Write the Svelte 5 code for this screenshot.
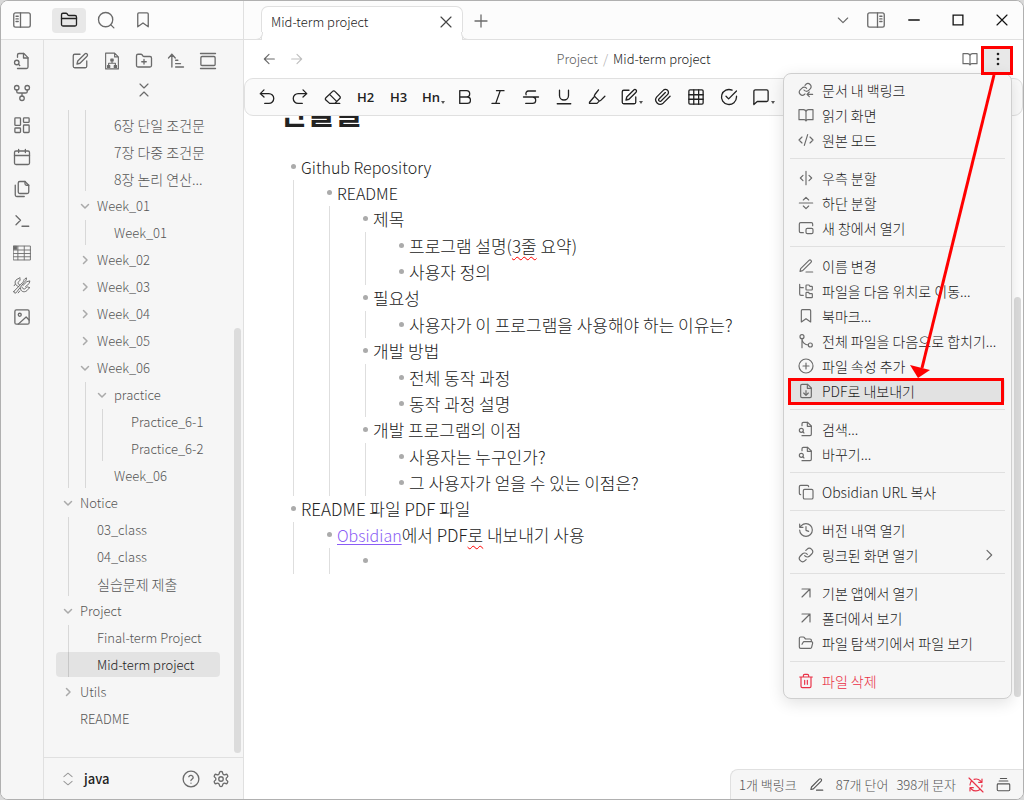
<script>
  const linkPaths =
    '<path d="M10 13a5 5 0 0 0 7.54.54l3-3a5 5 0 0 0-7.07-7.07l-1.72 1.71"/><path d="M14 11a5 5 0 0 0-7.54-.54l-3 3a5 5 0 0 0 7.07 7.07l1.71-1.71"/>';
  const folderPath =
    '<path d="M20 20a2 2 0 0 0 2-2V8a2 2 0 0 0-2-2h-7.9a2 2 0 0 1-1.69-.9L9.6 3.9A2 2 0 0 0 7.93 3H4a2 2 0 0 0-2 2v13a2 2 0 0 0 2 2Z"/>';
  const editPaths =
    '<path d="M12 3H5a2 2 0 0 0-2 2v14a2 2 0 0 0 2 2h14a2 2 0 0 0 2-2v-7"/><path d="M18.4 2.6a2.1 2.1 0 1 1 3 3L12 15l-4 1 1-4Z"/>';

  const icons = {
    panelLeft: '<rect x="1" y="2.500" width="22" height="19" rx="2.500"/><path d="M10 2.500v19M4 7h3M4 10.500h3M4 14h3"/>',
    panelRight: '<rect x="1" y="2.500" width="22" height="19" rx="2.500"/><path d="M14 2.500v19M17 7h3M17 10.500h3M17 14h3"/>',
    folder: folderPath + '<path d="M2 10h20"/>',
    search: '<circle cx="11.500" cy="11.500" r="9.500"/><path d="m22.500 22.500-4.300-4.300"/>',
    bookmark: '<path d="m19 21-7-5-7 5V4a1.500 1.500 0 0 1 1.500-1.500h11A1.500 1.500 0 0 1 19 4z"/>',
    fileSearch:
      '<path d="M6 22h12a2 2 0 0 0 2-2V7.500L14.500 2H8a2 2 0 0 0-2 2v3"/><path d="M14 2v6h6"/><circle cx="5" cy="14" r="3"/><path d="m9 18-1.700-1.700"/>',
    fork: '<circle cx="12" cy="19" r="3"/><circle cx="5" cy="5" r="3"/><circle cx="19" cy="5" r="3"/><path d="M19 8v1.500a2.500 2.500 0 0 1-2.500 2.500h-9A2.500 2.500 0 0 1 5 9.500V8M12 12v4"/>',
    dashboard:
      '<rect x="2.500" y="2.500" width="7.500" height="10" rx="1"/><rect x="14" y="2.500" width="7.500" height="6" rx="1"/><rect x="14" y="12" width="7.500" height="10" rx="1"/><rect x="2.500" y="16" width="7.500" height="6" rx="1"/>',
    calendar: '<rect x="2" y="4" width="20" height="18" rx="2"/><path d="M16.500 2v4M7.500 2v4M2 10h20"/>',
    files:
      '<path d="M21 7h-3a2 2 0 0 1-2-2V2"/><path d="M9 18a2 2 0 0 1-2-2V4a2 2 0 0 1 2-2h7l5 5v9a2 2 0 0 1-2 2Z"/><path d="M3 7v13a2 2 0 0 0 2 2h10"/>',
    terminal: '<path d="m4 17 6-6-6-6M12 19h9"/>',
    grid: '<g stroke-width="1.200"><path d="M.8 2.700h22.400v18.600H.8zM.8 8h22.400M.8 12.700h22.400M.8 17h22.400M6.500 3v18M15 3v18"/><path d="M1 3h4v4H1z" fill="currentColor"/></g>',
    tools:
      '<g stroke-width="1.300"><path d="M1.200 20.500 13 8.500c1.500-1.500 1-3.500 3-5l2-1-.5 3-3 3.500L4 22.500c-1.500 1-3.800-.8-2.800-2Z"/><path d="M7.500 14C3 13 1.500 8.500 4 5.500c1.500-2 4-1.500 5-3.500l.5 3.500C8 7.500 6 8 7 10.500l2 1.500"/><path d="M10 16.500c0 3.500 3.500 5.500 7 4 3-1.200 3-4 5.500-5l-3.500-1c-2 1-3 4-5.500 2.500L12 15"/><path d="m13.500 12.500 5-5 4-1-1 3.500-5 4.500M9 20l-2 2.500M3 11l-1.500 2"/></g>',
    image: '<rect x="2.500" y="2.500" width="19" height="19" rx="2"/><circle cx="9" cy="9" r="2"/><path d="m21.500 16-4-4L7 21.500"/>',
    edit: editPaths,
    canvas:
      '<g stroke-width="1.500"><path d="M3.500 1.500h12l5 5v16h-17zM15.500 1.500v5h5"/><path d="M12 12v3M7.500 18v-3h9v3"/><path d="M10.500 9.500h3V12h-3zM6 18h3v2.500H6zM15 18h3v2.500h-3z" fill="currentColor"/></g>',
    folderPlus: '<path d="M12 10v6M9 13h6"/>' + folderPath,
    sort: '<path d="m2 8 4.500-5L11 8M6.500 3v17M11.500 11h3M11.500 15.500h6.500M11.500 20h10.500"/>',
    gallery: '<path d="M2 2h20M2 22h20"/><rect x="2.500" y="6" width="19" height="12" rx="1.500"/>',
    collapse: '<path d="m6 21 6-6 6 6M6 3l6 6 6-6"/>',
    upDown: '<path d="m5 16 7 6 7-6M5 8l7-6 7 6"/>',
    help: '<circle cx="12" cy="12" r="10.500"/><path d="M9.100 9a3 3 0 0 1 5.800 1c0 2-3 2.500-3 4M12 17.500h.01"/>',
    gear: '<path d="M12.220 2h-.44a2 2 0 0 0-2 2v.18a2 2 0 0 1-1 1.730l-.43.25a2 2 0 0 1-2 0l-.15-.08a2 2 0 0 0-2.730.73l-.22.38a2 2 0 0 0 .73 2.730l.15.1a2 2 0 0 1 1 1.720v.51a2 2 0 0 1-1 1.740l-.15.09a2 2 0 0 0-.73 2.730l.22.38a2 2 0 0 0 2.730.73l.15-.08a2 2 0 0 1 2 0l.43.25a2 2 0 0 1 1 1.730V20a2 2 0 0 0 2 2h.44a2 2 0 0 0 2-2v-.18a2 2 0 0 1 1-1.730l.43-.25a2 2 0 0 1 2 0l.15.08a2 2 0 0 0 2.730-.73l.22-.39a2 2 0 0 0-.73-2.730l-.15-.08a2 2 0 0 1-1-1.740v-.5a2 2 0 0 1 1-1.740l.15-.09a2 2 0 0 0 .73-2.730l-.22-.38a2 2 0 0 0-2.730-.73l-.15.08a2 2 0 0 1-2 0l-.43-.25a2 2 0 0 1-1-1.730V4a2 2 0 0 0-2-2z"/><circle cx="12" cy="12" r="3"/>',
    down: '<path d="m5 9 7 7 7-7"/>',
    right: '<path d="m9 5 7 7-7 7"/>',
    arrowLeft: '<path d="m12 19-7-7 7-7M20 12H5"/>',
    arrowRight: '<path d="m12 5 7 7-7 7M4 12h15"/>',
    close: '<path d="M4.500 4.500l15 15M19.500 4.500l-15 15"/>',
    plus: '<path d="M4 12h16M12 4v16"/>',
    minimize: '<path d="M5 12h14"/>',
    maximize: '<path d="M5.500 5.500h13v13h-13z" stroke-linejoin="miter"/>',
    undo: '<path d="M8 12 3 7.500l5-5M3 7.500h11.500a6.500 6.500 0 0 1 0 13H9"/>',
    redo: '<path d="m16 12 5-4.500-5-5M21 7.500H9.500a6.500 6.500 0 0 0 0 13H15"/>',
    eraser: '<path d="M9 20.500H7.500l-5-4.500a2 2 0 0 1 0-3l9-8.500a2 2 0 0 1 3 0l6.500 6.500a2 2 0 0 1 0 3l-6.500 6.500H9M7.500 8.500l9 9M14.500 20.500H21"/>',
    bold: '<path d="M6 12h9a4.200 4.200 0 0 1 0 8.500H5V3.500h9a4.200 4.200 0 0 1 0 8.500M5 12h1"/>',
    italic: '<path d="M20 3.500H10M14 20.500H4M15 3.500l-6 17"/>',
    strike: '<path d="M18 4H9a3.500 3.500 0 0 0-3.500 5M14 12a4 4 0 0 1 0 8.500H5M2 12h20"/>',
    underline: '<path d="M6 3v7a6 6 0 0 0 12 0V3M3 21h18"/>',
    highlight: '<path d="m8 12-6 7v1.500h10l3-3M22.500 11l-5.500 5.500a2 2 0 0 1-2.800 0l-5-5a2 2 0 0 1 0-2.800L14 2.500"/>',
    clip: '<path d="m21.400 11-9.200 9.200a6 6 0 0 1-8.500-8.400l8.600-8.600A4 4 0 1 1 18 8.800l-8.600 8.600a2 2 0 0 1-2.800-2.800l8.500-8.500"/>',
    table: '<rect x="2.500" y="2.500" width="19" height="19" rx="1.500"/><path d="M2.500 9h19M2.500 15h19M9 2.500v19M15.500 2.500v19"/>',
    check: '<path d="M22 11v1a10 10 0 1 1-5.900-9.100"/><path d="m8 11 3.500 3.500L22 4"/>',
    comment: '<path d="M21.500 16a2 2 0 0 1-2 2H7l-4.500 4V4.500a2 2 0 0 1 2-2h15a2 2 0 0 1 2 2z"/>',
    book: '<path d="M1.500 4H8a4 4 0 0 1 4 3v14a3 3 0 0 0-3-2H1.500zM22.500 4H16a4 4 0 0 0-4 3v14a3 3 0 0 1 3-2h7.500z"/>',
    more: '<path d="M12 4.500h.01M12 12h.01M12 19.500h.01" stroke-width="4"/>',
    backlink:
      '<path d="M9 12a4.500 4.500 0 0 0 7 .5l2.500-2.500a4.700 4.700 0 0 0-6.600-6.600L10.500 5"/><path d="M13 9.500a4.500 4.500 0 0 0-7-.3l-3 3a4.700 4.700 0 0 0 6.600 6.600l.9-1"/><path d="M22 18.500h-8M17 15l-3.500 3.500L17 22"/>',
    code: '<path d="m18 16.500 4.500-4.500L18 7.500M6 7.500 1.500 12 6 16.500M14.500 4l-5 16"/>',
    splitV: '<path d="M12 2v20M7.500 8l-4 4 4 4M16.500 16l4-4-4-4"/>',
    splitH: '<path d="M2 12h20M8 7.500l4-4 4 4M16 16.500l-4 4-4-4"/>',
    popout: '<path d="M22 8.500V6a2 2 0 0 0-2-2H4a2 2 0 0 0-2 2v11a2 2 0 0 0 2 2h4"/><rect x="12" y="12.500" width="10.500" height="8" rx="2"/>',
    pen: '<path d="M12 21h10"/><path d="M16.500 3.500a2.100 2.100 0 0 1 3 3L7 19l-4 1 1-4Z"/>',
    tree: '<path d="M20.500 10.500a1 1 0 0 0 1-1V6a1 1 0 0 0-1-1H18l-1.500-2H13a1 1 0 0 0-1 1v5.500a1 1 0 0 0 1 1ZM20.500 22a1 1 0 0 0 1-1v-4a1 1 0 0 0-1-1H17l-1-2h-3a1 1 0 0 0-1 1v6a1 1 0 0 0 1 1Z"/><path d="M2.500 2v14.500a2 2 0 0 0 2 2H8M2.500 5a2 2 0 0 0 2 2H8"/>',
    merge: '<circle cx="18.500" cy="18" r="3"/><circle cx="6" cy="5.500" r="3"/><path d="M6 22V8.500a9.500 9.500 0 0 0 9.500 9.500"/>',
    plusCircle: '<circle cx="12" cy="12" r="10.500"/><path d="M7.500 12h9M12 7.500v9"/>',
    fileDown: '<path d="M14.500 2H6a2 2 0 0 0-2 2v16a2 2 0 0 0 2 2h12a2 2 0 0 0 2-2V7.500L14.500 2z"/><path d="M14 2v6h6M12 18v-6.500M8.500 15l3.500 3.500 3.500-3.500"/>',
    copy: '<rect x="8" y="8" width="14.500" height="14.500" rx="2"/><path d="M4 16a2 2 0 0 1-2-2V4a2 2 0 0 1 2-2h10a2 2 0 0 1 2 2"/>',
    history: '<path d="M2.500 12A9.500 9.500 0 1 0 12 2.500a10 10 0 0 0-7 3L2.500 8M2.500 3v5h5M12 7v5.500l4 1.500"/>',
    link: linkPaths,
    upRight: '<path d="M6 6h12v12M6 18 18 6"/>',
    folderOpen:
      '<path d="m6 14 1.500-2.900A2 2 0 0 1 9.200 10H20a2 2 0 0 1 1.900 2.500l-1.500 6a2 2 0 0 1-2 1.500H4a2 2 0 0 1-2-2V5a2 2 0 0 1 2-2h3.900a2 2 0 0 1 1.700.9l.8 1.200a2 2 0 0 0 1.700.9H18a2 2 0 0 1 2 2v2"/>',
    trash: '<path d="M2.500 6h19M19.500 6v14a2 2 0 0 1-2 2h-11a2 2 0 0 1-2-2V6M8 6V4a2 2 0 0 1 2-2h4a2 2 0 0 1 2 2v2M10 11v6M14 11v6"/>',
    syncOff:
      '<path d="m21 8-2.300-2.300A9.700 9.700 0 0 0 9.100 3.500M8 16H3v5M3 12a9 9 0 0 1 2.600-6.400M3 16l2.300 2.300a9.700 9.700 0 0 0 13.100.1M21 12a9 9 0 0 1-.5 2.900M21 3v5h-5M22.500 22.500l-21-21"/>',
    stack: '<path d="M7 2.500h10M5 6.500h14"/><rect x="2" y="11" width="20" height="11" rx="1.500"/>',
  };

  const ribbon = [
    ['fileSearch', '빠른 전환기'], ['fork', '그래프 뷰'], ['dashboard', '캔버스'], ['calendar', '일일 노트'], ['files', '템플릿'],
    ['terminal', '명령어'], ['grid', '표'], ['tools', '도구'], ['image', '이미지'],
  ];
  const navActions = [
    ['edit', '새 노트'], ['canvas', '새 캔버스'], ['folderPlus', '새 폴더'], ['sort', '정렬'], ['gallery', '자동 표시'], ['collapse', '모두 접기'],
  ];

  const tree = [
    { kids: [
      { kids: [{ name: '6장 단일 조건문' }, { name: '7장 다중 조건문' }, { name: '8장 논리 연산...' }] },
      { name: 'Week_01', open: true, kids: [{ name: 'Week_01' }] },
      { name: 'Week_02', open: false },
      { name: 'Week_03', open: false },
      { name: 'Week_04', open: false },
      { name: 'Week_05', open: false },
      { name: 'Week_06', open: true, kids: [
        { name: 'practice', open: true, kids: [{ name: 'Practice_6-1' }, { name: 'Practice_6-2' }] },
        { name: 'Week_06' },
      ] },
    ] },
    { name: 'Notice', open: true, kids: [{ name: '03_class' }, { name: '04_class' }, { name: '실습문제 제출' }] },
    { name: 'Project', open: true, kids: [{ name: 'Final-term Project' }, { name: 'Mid-term project', active: true }] },
    { name: 'Utils', open: false },
    { name: 'README' },
  ];

  const tools = [
    { icon: 'undo' }, { icon: 'redo' }, { icon: 'eraser' }, { text: 'H2' }, { text: 'H3' }, { text: 'Hn', more: true },
    { icon: 'bold' }, { icon: 'italic' }, { icon: 'strike' }, { icon: 'underline' }, { icon: 'highlight' },
    { icon: 'edit', more: true }, { icon: 'clip' }, { icon: 'table' }, { icon: 'check' }, { icon: 'comment', more: true },
  ];

  const notes = [
    { parts: [['Github Repository']], kids: [
      { parts: [['README']], kids: [
        { parts: [['제목']], kids: [
          { parts: [['프로그램 설명('], ['3줄', 'typo'], [' 요약)']] },
          { parts: [['사용자 정의']] },
        ] },
        { parts: [['필요성']], kids: [{ parts: [['사용자가 이 프로그램을 사용해야 하는 이유는?']] }] },
        { parts: [['개발 방법']], kids: [{ parts: [['전체 동작 과정']] }, { parts: [['동작 과정 설명']] }] },
        { parts: [['개발 프로그램의 이점']], kids: [
          { parts: [['사용자는 누구인가?']] },
          { parts: [['그 사용자가 얻을 수 있는 이점은?']] },
        ] },
      ] },
    ] },
    { parts: [['README 파일 PDF 파일']], kids: [
      { parts: [['Obsidian', 'link'], ['에서 PDF'], ['로', 'typo'], [' 내보내기 사용']], kids: [{ parts: [] }] },
    ] },
  ];

  const menu = [
    [['backlink', '문서 내 백링크'], ['book', '읽기 화면'], ['code', '원본 모드']],
    [['splitV', '우측 분할'], ['splitH', '하단 분할'], ['popout', '새 창에서 열기']],
    [['pen', '이름 변경'], ['tree', '파일을 다음 위치로 이동...'], ['bookmark', '북마크...'], ['merge', '전체 파일을 다음으로 합치기...'],
      ['plusCircle', '파일 속성 추가'], ['fileDown', 'PDF로 내보내기', 'selected']],
    [['fileSearch', '검색...'], ['fileSearch', '바꾸기...']],
    [['copy', 'Obsidian URL 복사']],
    [['history', '버전 내역 열기'], ['link', '링크된 화면 열기', 'submenu']],
    [['upRight', '기본 앱에서 열기'], ['upRight', '폴더에서 보기'], ['folderOpen', '파일 탐색기에서 파일 보기']],
    [['trash', '파일 삭제', 'danger']],
  ];

  const isLatin = (text) => !/[가-힣]/.test(text);
</script>

{#snippet icon(name, size = 18)}
  <svg class="icon" width={size} height={size} viewBox="0 0 24 24" aria-hidden="true">{@html icons[name]}</svg>
{/snippet}

{#snippet branch(items, depth)}
  <ul class="branch d{depth}">
    {#each items as item}
      <li>
        {#if item.name}
          <button class="file" class:latin={isLatin(item.name)} class:active={item.active}>
            {#if item.open !== undefined}
              <span class="twist">{@render icon(item.open ? 'down' : 'right', 12)}</span>
            {/if}
            <span>{item.name}</span>
          </button>
        {/if}
        {#if item.kids}{@render branch(item.kids, depth + 1)}{/if}
      </li>
    {/each}
  </ul>
{/snippet}

{#snippet outline(items)}
  <ul class="outline">
    {#each items as item}
      <li>
        <p class:latin={item.parts.every(([text]) => isLatin(text))}>
          {#each item.parts as [text, kind]}{#if kind === 'link'}<a href="#obsidian">{text}</a>{:else}<span class:typo={kind === 'typo'}>{text}</span>{/if}{/each}
        </p>
        {#if item.kids}{@render outline(item.kids)}{/if}
      </li>
    {/each}
  </ul>
{/snippet}

<div class="window">
  <header class="titlebar">
    <div class="side-tabs">
      <button class="tool" aria-label="사이드바 접기">{@render icon('panelLeft')}</button>
      <button class="tool on" aria-label="파일">{@render icon('folder')}</button>
      <button class="tool" aria-label="찾기">{@render icon('search')}</button>
      <button class="tool" aria-label="책갈피">{@render icon('bookmark')}</button>
    </div>
    <div class="tabs">
      <div class="tab">
        <span class="latin">Mid-term project</span>
        <button aria-label="탭 닫기">{@render icon('close', 16)}</button>
      </div>
      <button class="add" aria-label="새 탭">{@render icon('plus', 18)}</button>
    </div>
    <div class="controls">
      <button class="tool" aria-label="탭 목록">{@render icon('down', 16)}</button>
      <button class="tool" aria-label="오른쪽 사이드바">{@render icon('panelRight')}</button>
      <button class="sys" aria-label="최소화">{@render icon('minimize', 18)}</button>
      <button class="sys" aria-label="최대화">{@render icon('maximize', 18)}</button>
      <button class="sys" aria-label="닫기">{@render icon('close', 16)}</button>
    </div>
  </header>

  <div class="body">
    <nav class="ribbon">
      {#each ribbon as [name, label]}
        <button aria-label={label}>{@render icon(name)}</button>
      {/each}
    </nav>

    <aside class="sidebar">
      <div class="nav-actions">
        {#each navActions as [name, label]}
          <button aria-label={label}>{@render icon(name, name === 'collapse' ? 16 : 18)}</button>
        {/each}
      </div>
      <div class="files">
        {@render branch(tree, 0)}
        <span class="thumb"></span>
      </div>
      <div class="vault">
        <button class="vault-name latin">{@render icon('upDown', 14)}<span>java</span></button>
        <button aria-label="도움말">{@render icon('help')}</button>
        <button aria-label="설정">{@render icon('gear')}</button>
      </div>
    </aside>

    <main class="editor">
      <div class="view-header">
        <div class="history">
          <button aria-label="뒤로">{@render icon('arrowLeft', 16)}</button>
          <button class="dim" aria-label="앞으로">{@render icon('arrowRight', 16)}</button>
        </div>
        <div class="crumbs latin"><span>Project</span><i>/</i><b>Mid-term project</b></div>
        <div class="view-actions">
          <button aria-label="읽기 화면">{@render icon('book', 16)}</button>
          <button class="more" aria-label="더 보기">{@render icon('more', 16)}</button>
        </div>
      </div>
      <div class="toolbar">
        {#each tools as tool}
          <button aria-label={tool.icon}>
            {#if tool.icon}{@render icon(tool.icon)}{:else}<span>{tool.text}</span>{/if}
            {#if tool.more}<em></em>{/if}
          </button>
        {/each}
      </div>
      <article>
        <h2>산출물</h2>
        {@render outline(notes)}
      </article>
      <span class="thumb"></span>
    </main>
  </div>

  <footer class="status">
    <span>1개 백링크</span>
    {@render icon('pen', 15)}
    <span>87개 단어</span>
    <span>398개 문자</span>
    <span class="danger">{@render icon('syncOff', 16)}</span>
    {@render icon('stack', 15)}
  </footer>

  <div class="menu" role="menu">
    {#each menu as group}
      <div class="group">
        {#each group as [name, label, kind]}
          <button role="menuitem" class={kind}>
            {@render icon(name, 16)}
            <span>{label}</span>
            {#if kind === 'submenu'}{@render icon('right', 16)}{/if}
          </button>
        {/each}
      </div>
    {/each}
  </div>

  <svg class="callout" width="236" height="366" viewBox="0 0 236 366" aria-hidden="true">
    <rect x="196.500" y="3.500" width="29" height="26"/>
    <rect x="3.500" y="335.500" width="213" height="24"/>
    <path d="M208 31 136 324"/>
    <path class="head" d="M132 334 124 321 144 326Z"/>
  </svg>
</div>

<style>
  :global(body) { margin: 0; background: #d9d9d9; }
  * { box-sizing: border-box; }
  .window {
    position: relative;
    display: flex;
    flex-direction: column;
    height: 100vh;
    border: 1px solid #b0b0b0;
    border-radius: 8px;
    overflow: hidden;
    background: #fff;
    color: #222;
    font: 14px/20px "Noto Sans CJK KR", "Noto Sans", sans-serif;
    font-weight: 300;
  }
  button { display: flex; align-items: center; justify-content: center; padding: 0; border: 0; background: none; color: #6b6b6b; font: inherit; }
  ul { list-style: none; margin: 0; padding: 0; }
  .icon { display: block; flex: none; fill: none; stroke: currentColor; stroke-width: 1.75; stroke-linecap: round; stroke-linejoin: round; }
  .latin { font-size: 13px; }

  .titlebar { display: flex; height: 39px; flex: none; background: #fcfcfc; border-bottom: 1px solid #e0e0e0; }
  .side-tabs { display: flex; align-items: center; width: 243px; padding-left: 4px; gap: 3px; border-right: 1px solid #e0e0e0; }
  .tool { width: 34px; height: 25px; border-radius: 4px; }
  .side-tabs .tool:first-child { margin-right: 10px; }
  .tool.on { background: #e8e8e8; color: #222; }
  .tabs { display: flex; flex: 1; align-items: flex-end; padding-left: 17px; }
  .tab {
    position: relative;
    display: flex;
    align-items: center;
    justify-content: space-between;
    width: 202px;
    height: 34px;
    margin-bottom: -1px;
    padding: 0 8px 3px 9px;
    border: 1px solid #e0e0e0;
    border-bottom: 0;
    border-radius: 7px 7px 0 0;
    background: #fff;
  }
  .tab::before, .tab::after { content: ""; position: absolute; bottom: 0; width: 7px; height: 7px; border-bottom: 1px solid #e0e0e0; background: #fcfcfc; }
  .tab::before { left: -7px; border-right: 1px solid #e0e0e0; border-bottom-right-radius: 7px; }
  .tab::after { right: -7px; border-left: 1px solid #e0e0e0; border-bottom-left-radius: 7px; }
  .tab button { color: #444; }
  .add { width: 36px; height: 36px; }
  .controls { display: flex; align-items: center; margin-right: -1px; }
  .controls .tool { width: 33px; }
  .controls .sys { width: 44px; height: 38px; color: #111; }

  .body { display: flex; flex: 1; min-height: 0; }
  .ribbon { display: flex; flex-direction: column; width: 43px; padding-top: 5px; background: #f6f6f6; border-right: 1px solid #e0e0e0; }
  .ribbon button { height: 32px; }
  .sidebar { display: flex; flex-direction: column; width: 200px; background: #f6f6f6; border-right: 1px solid #e0e0e0; }
  .nav-actions { display: flex; flex-wrap: wrap; justify-content: center; padding: 6px 16px 0; height: 70px; align-content: flex-start; }
  .nav-actions button { width: 32px; height: 29px; }
  .files { position: relative; flex: 1; min-height: 0; padding: 0 23px 0 12px; }
  .branch, .branch li { display: grid; gap: 2px; }
  .branch { background: linear-gradient(#d8d8d8, #d8d8d8) no-repeat; background-size: 1px 100%; }
  .d0 { background: none; }
  .d1 { background-position: 12px 0; }
  .d2 { background-position: 29px 0; }
  .d3 { background-position: 46px 0; }
  .d0 > li:first-child > .d1 > li:first-child > .d2 { padding-top: 2px; }
  .file { position: relative; justify-content: flex-start; height: 25px; padding-left: 24px; border-radius: 4px; color: #555; white-space: nowrap; }
  .d1 > li > .file { padding-left: 41px; }
  .d2 > li > .file { padding-left: 58px; }
  .d3 > li > .file { padding-left: 75px; }
  .file.active { background: rgba(0, 0, 0, 0.075); color: #222; }
  .twist { width: 12px; margin-left: -18px; margin-right: 6px; color: #aaa; }
  .twist .icon { stroke-width: 3; }
  .thumb { position: absolute; width: 7px; border-radius: 4px; background: #dcdcdc; }
  .files .thumb { right: 2px; bottom: 4px; height: 425px; }
  .vault { display: flex; align-items: center; gap: 12px; height: 42px; padding: 0 13px 0 17px; border-top: 1px solid #e0e0e0; }
  .vault-name { flex: 1; justify-content: flex-start; gap: 9px; color: #999; }
  .vault-name span { color: #222; font-weight: 500; }

  .editor { position: relative; display: flex; flex-direction: column; flex: 1; min-width: 0; }
  .view-header { display: flex; align-items: center; height: 38px; flex: none; padding: 0 11px 1px; }
  .history, .view-actions { display: flex; flex: 1; }
  .history button, .view-actions button { width: 28px; height: 26px; }
  .history .dim { color: #c0c0c0; }
  .crumbs { display: flex; gap: 5px; color: #5c5c5c; }
  .crumbs i { color: #aaa; font-style: normal; }
  .crumbs b { color: #222; font-weight: inherit; }
  .view-actions { justify-content: flex-end; }
  .view-actions .more { background: #e8e8e8; color: #222; }
  .toolbar { display: flex; align-items: center; height: 38px; flex: none; padding-left: 5px; border: 1px solid #e0e0e0; border-radius: 9px; background: #fafafa; }
  .toolbar button { position: relative; width: 33px; height: 30px; color: #222; }
  .toolbar span { font: 600 13px/20px "Open Sans", sans-serif; }
  .toolbar em { align-self: flex-end; margin: 0 -4px 8px 1px; border: 2px solid transparent; border-top: 3px solid #555; border-bottom: 0; }

  article { flex: 1; min-height: 0; overflow: hidden; padding: 0 36px; font-size: 17px; }
  h2 { margin: -22px 0 25px; font-size: 30px; line-height: 35px; font-weight: 700; }
  .outline p { position: relative; min-height: 26px; margin: 0; padding-left: 21px; line-height: 26px; }
  .outline p.latin { font-size: 16px; }
  .outline p::before { content: ""; position: absolute; left: 11px; top: 10px; width: 5px; height: 5px; border-radius: 50%; background: #ababab; }
  .outline .outline { padding-left: 36px; background: linear-gradient(#dedede, #dedede) no-repeat 13px 0 / 1px 100%; }
  .outline .outline .outline .outline { padding-top: 1px; }
  .outline a { color: #8a5cf5; font-size: 16px; text-decoration: underline; text-underline-offset: 2px; }
  .typo { text-decoration: underline wavy #f00 1px; text-underline-offset: 3px; }
  .editor > .thumb { right: 2px; top: 257px; height: 400px; }

  .status {
    position: absolute;
    right: 0;
    bottom: 0;
    display: flex;
    align-items: center;
    gap: 12px;
    height: 30px;
    padding: 0 12px 0 8px;
    border: 1px solid #e0e0e0;
    border-width: 1px 0 0 1px;
    border-radius: 8px 0 0 0;
    background: #f6f6f6;
    color: #555;
    font-size: 13px;
  }
  .status span:nth-of-type(3) { margin-left: -4px; }
  .danger, .menu .danger { color: #e93147; }

  .menu {
    position: absolute;
    top: 72px;
    right: 11px;
    width: 229px;
    padding: 3px 6px 5px;
    border: 1px solid #cfcfcf;
    border-radius: 8px;
    background: #f6f6f6;
    box-shadow: 0 4px 16px rgba(0, 0, 0, 0.12);
  }
  .group + .group { margin-top: 6px; padding-top: 6px; border-top: 1px solid #e0e0e0; }
  .menu button { width: 100%; height: 25px; gap: 8px; padding: 0 8px; border-radius: 4px; white-space: nowrap; justify-content: flex-start; }
  .menu button span { flex: 1; text-align: left; color: #222; }
  .menu .selected { background: #e2e2e2; }
  .menu .danger span { color: inherit; }

  .callout { position: absolute; top: 43px; right: 1px; fill: none; stroke: #f00; stroke-width: 3; }
  .callout .head { fill: #f00; stroke: none; }
</style>
